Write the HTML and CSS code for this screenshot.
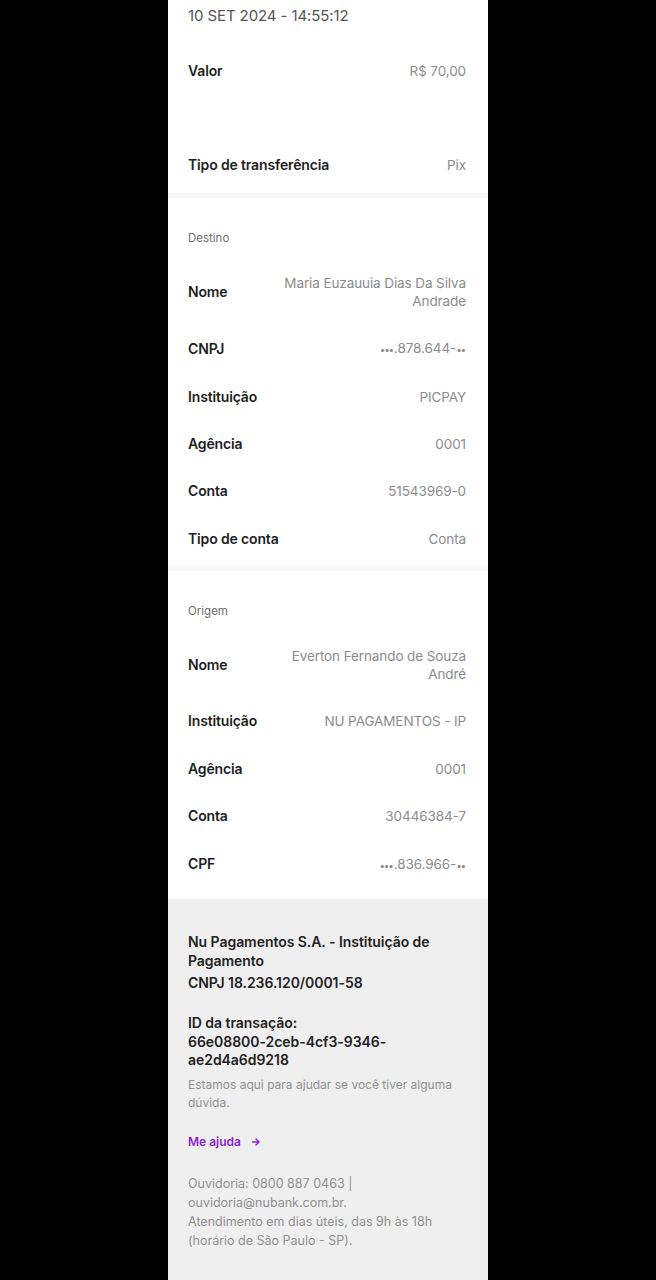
FILE: index.html
```html
<!DOCTYPE html>
<html lang="pt-BR">
<head>
<meta charset="utf-8">
<link rel="stylesheet" href="styles.css">
</head>
<body>
<main class="receipt">
  <div class="date">10 SET 2024 - 14:55:12</div>

  <section class="section first">
    <div class="row"><span class="label">Valor</span><span class="value">R$ 70,00</span></div>
    <div class="row empty"></div>
    <div class="row"><span class="label">Tipo de transferência</span><span class="value">Pix</span></div>
  </section>

  <div class="divider"></div>

  <section class="section">
    <div class="section-title">Destino</div>
    <div class="row"><span class="label">Nome</span><span class="value">Maria Euzauuia Dias Da Silva<br>Andrade</span></div>
    <div class="row"><span class="label">CNPJ</span><span class="value"><span class="mask">•••</span>.878.644-<span class="mask">••</span></span></div>
    <div class="row"><span class="label">Instituição</span><span class="value">PICPAY</span></div>
    <div class="row"><span class="label">Agência</span><span class="value">0001</span></div>
    <div class="row"><span class="label">Conta</span><span class="value">51543969-0</span></div>
    <div class="row"><span class="label">Tipo de conta</span><span class="value">Conta</span></div>
  </section>

  <div class="divider"></div>

  <section class="section last">
    <div class="section-title">Origem</div>
    <div class="row"><span class="label">Nome</span><span class="value">Everton Fernando de Souza<br>André</span></div>
    <div class="row"><span class="label">Instituição</span><span class="value">NU PAGAMENTOS - IP</span></div>
    <div class="row"><span class="label">Agência</span><span class="value">0001</span></div>
    <div class="row"><span class="label">Conta</span><span class="value">30446384-7</span></div>
    <div class="row"><span class="label">CPF</span><span class="value"><span class="mask">•••</span>.836.966-<span class="mask">••</span></span></div>
  </section>

  <footer class="footer">
    <p class="strong">Nu Pagamentos S.A. - Instituição de<br>Pagamento</p>
    <p class="strong cnpj">CNPJ 18.236.120/0001-58</p>
    <p class="strong txid">ID da transação:<br>66e08800-2ceb-4cf3-9346-<br>ae2d4a6d9218</p>
    <p class="help">Estamos aqui para ajudar se você tiver alguma<br>dúvida.</p>
    <a class="link" href="#">Me ajuda <svg class="arrow" viewBox="0 0 10 10" width="10" height="10"><path d="M1.5 5h6.5M5 2l3 3-3 3" fill="none" stroke="currentColor" stroke-width="1.4" stroke-linecap="round" stroke-linejoin="round"/></svg></a>
    <p class="ouvidoria">Ouvidoria: 0800 887 0463 |<br>ouvidoria@nubank.com.br.<br>Atendimento em dias úteis, das 9h às 18h<br>(horário de São Paulo - SP).</p>
  </footer>
</main>
</body>
</html>
```

FILE: styles.css
```css
* { box-sizing: border-box; }
html, body {
  margin: 0;
  padding: 0;
  background: #000;
  height: 100%;
}
body {
  font-family: "Inter", "Roboto", "Liberation Sans", sans-serif;
  -webkit-font-smoothing: antialiased;
}
.receipt {
  width: 320px;
  min-height: 1280px;
  margin: 0 auto;
  background: #fff;
  display: flex;
  flex-direction: column;
}
.date {
  padding: 6px 20px 0;
  font-size: 15px;
  line-height: 20px;
  color: #555;
  letter-spacing: -0.1px;
}
.section {
  padding: 0 22px 0 20px;
  display: flex;
  flex-direction: column;
}
.section.first { padding-top: 21px; }
.section.last { padding-bottom: 11px; }
.row {
  display: flex;
  justify-content: space-between;
  align-items: center;
  padding: 14.7px 0;
  font-size: 13.5px;
  line-height: 18px;
  gap: 16px;
}
.row.empty { min-height: 47.4px; }
.label {
  color: #1e1e1e;
  font-size: 14px;
  font-weight: 600;
  white-space: nowrap;
  letter-spacing: -0.15px;
}
.value {
  color: #8c8c8c;
  text-align: right;
  letter-spacing: -0.1px;
}
.mask {
  font-size: 10px;
  letter-spacing: -1.2px;
  margin-right: 1px;
}
.divider {
  margin-top: 4px;
  height: 5px;
  background: #f7f7f7;
}
.section-title {
  padding: 32px 0 13px;
  font-size: 11.5px;
  line-height: 16px;
  color: #6f6f6f;
}
.footer {
  flex: 1;
  background: #efefef;
  padding: 34px 22px 20px 20px;
  display: flex;
  flex-direction: column;
  align-items: flex-start;
}
.footer p { margin: 0; }
.footer .strong {
  font-size: 14px;
  line-height: 18.5px;
  font-weight: 600;
  color: #222;
  letter-spacing: -0.05px;
}
.footer .cnpj { margin-top: 4px; }
.footer .txid { margin-top: 21.5px; }
.footer .help {
  margin-top: 6.5px;
  font-size: 12px;
  line-height: 18px;
  color: #8f8f8f;
}
.footer .link {
  margin-top: 22px;
  display: inline-flex;
  align-items: center;
  gap: 10px;
  font-size: 12px;
  line-height: 16px;
  font-weight: 600;
  color: #8a1fd6;
  text-decoration: none;
}
.arrow { display: block; }
.footer .ouvidoria {
  margin-top: 24px;
  font-size: 12.5px;
  line-height: 19px;
  color: #8f8f8f;
}
```
